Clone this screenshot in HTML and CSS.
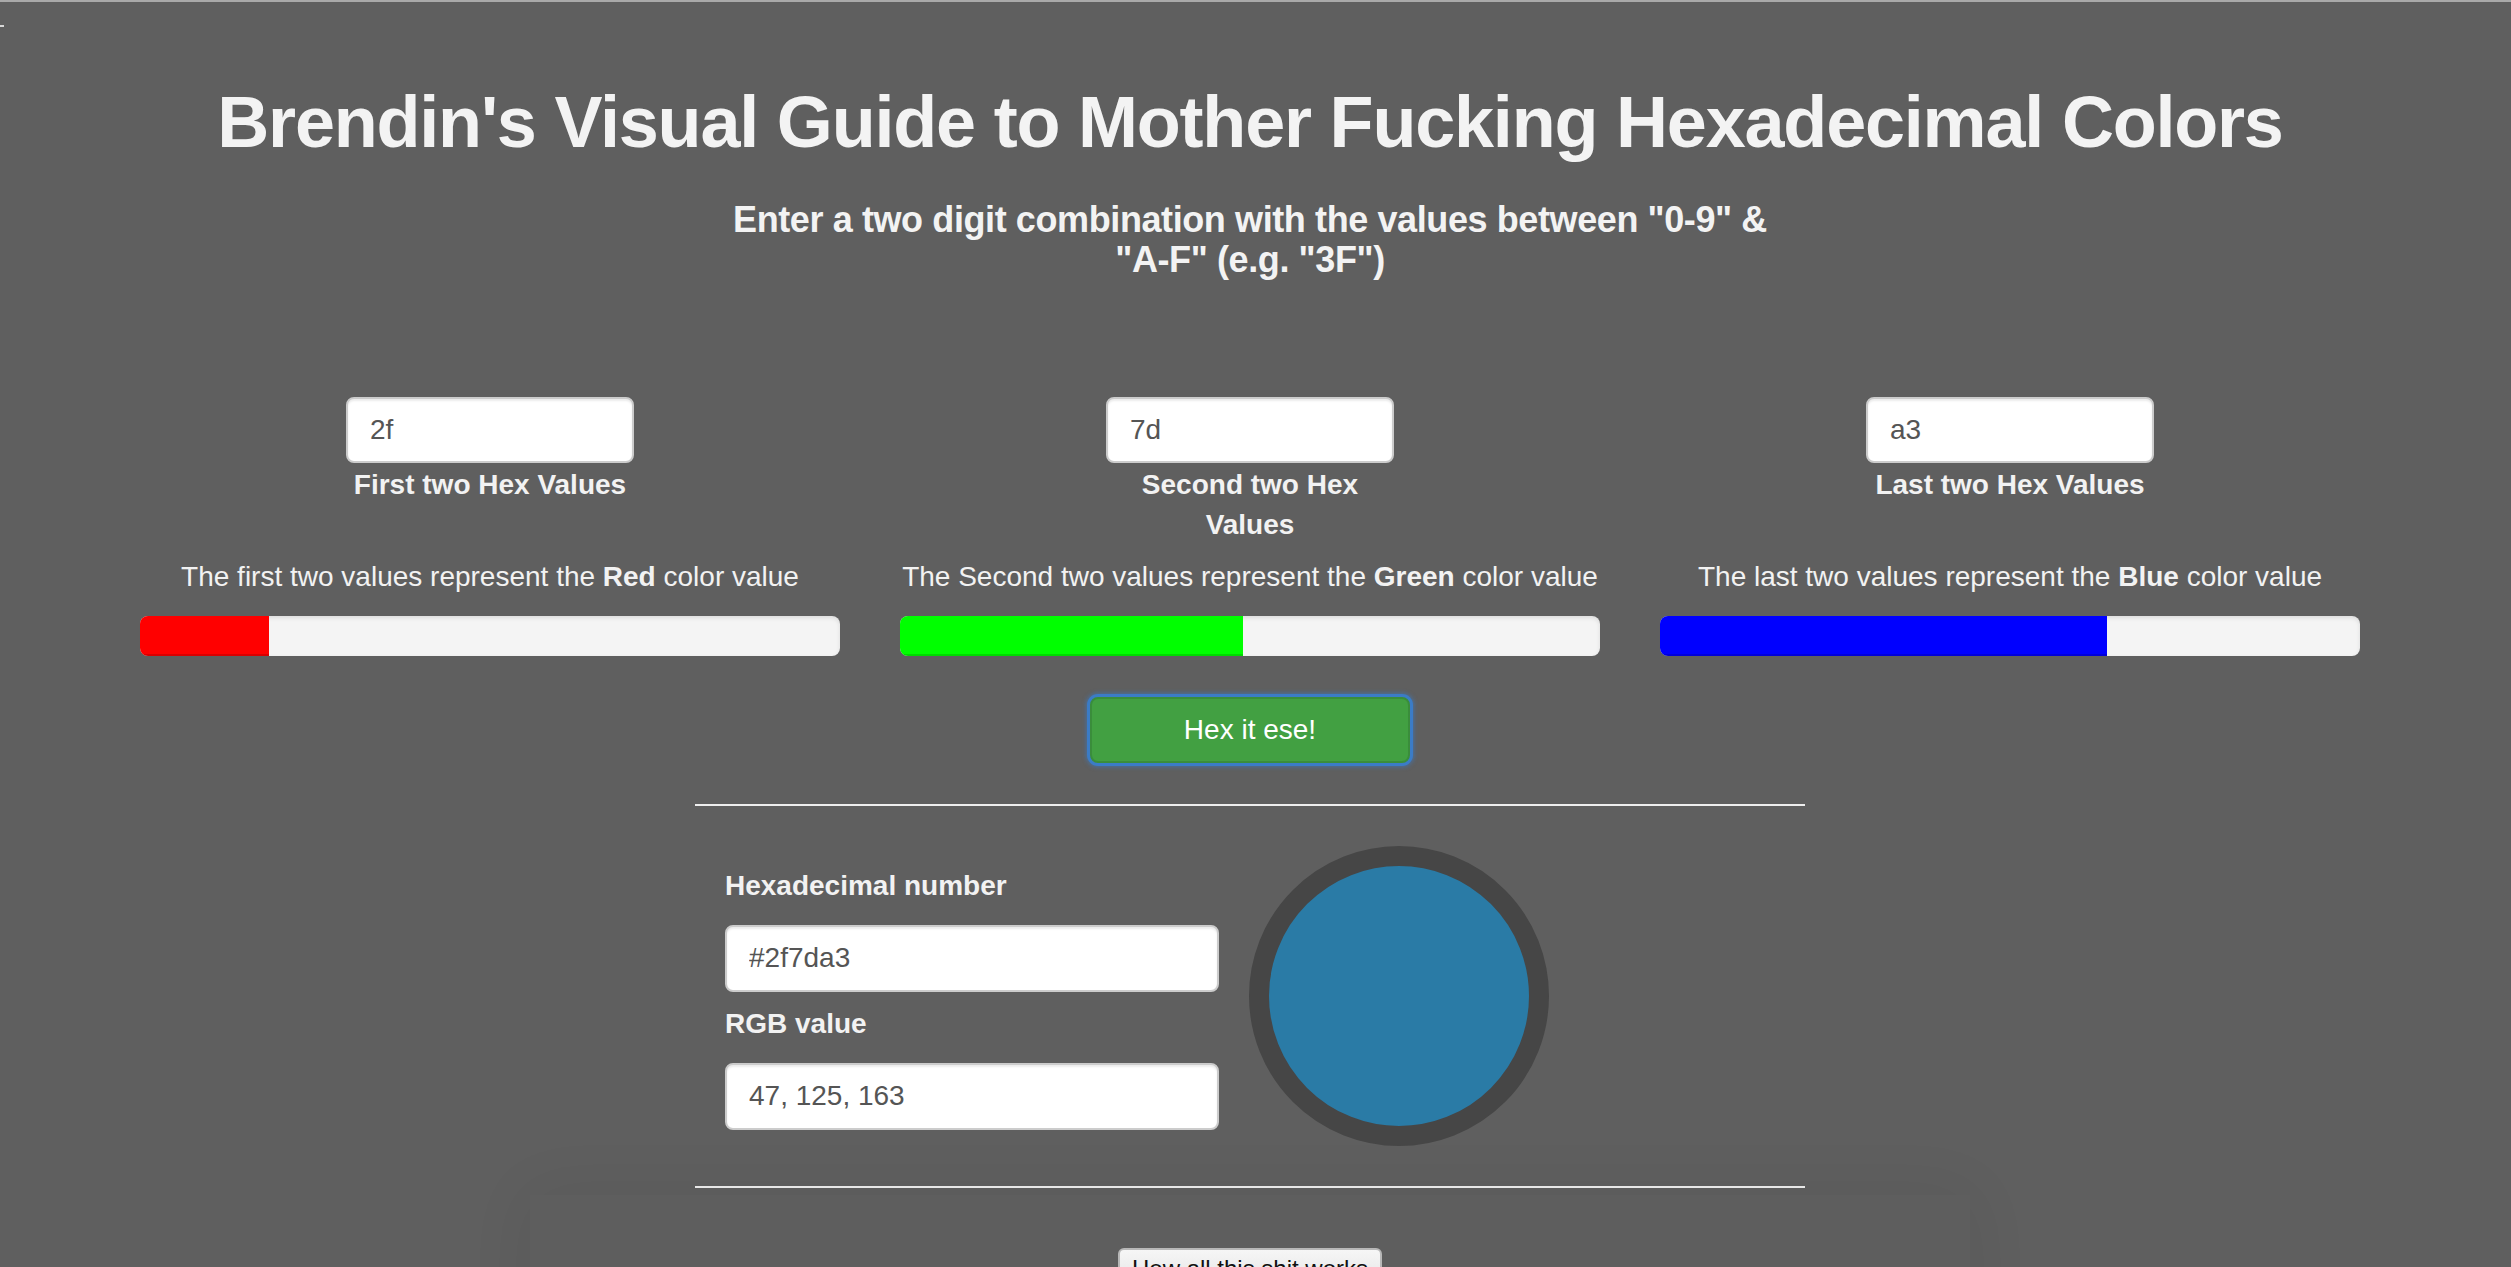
FILE: index.html
```html
<!DOCTYPE html>
<html lang="en">
<head>
<meta charset="utf-8">
<title>Brendin's Visual Guide to Hexadecimal Colors</title>
<link rel="stylesheet" href="styles.css">
</head>
<body>
<span class="corner-mark"></span>
<div class="page">
  <h1 class="title">Brendin's Visual Guide to Mother Fucking Hexadecimal Colors</h1>
  <h4 class="subtitle">Enter a two digit combination with the values between "0-9" &amp; "A-F" (e.g. "3F")</h4>

  <div class="hex-row">
    <div class="col">
      <div class="field">
        <input class="text-input" type="text" value="2f">
        <label class="field-label">First two Hex Values</label>
      </div>
    </div>
    <div class="col">
      <div class="field">
        <input class="text-input" type="text" value="7d">
        <label class="field-label">Second two Hex Values</label>
      </div>
    </div>
    <div class="col">
      <div class="field">
        <input class="text-input" type="text" value="a3">
        <label class="field-label">Last two Hex Values</label>
      </div>
    </div>
  </div>

  <div class="desc-row">
    <div class="col">
      <p class="desc">The first two values represent the <b>Red</b> color value</p>
      <div class="bar"><div class="fill fill-red" style="width:18.4%"></div></div>
    </div>
    <div class="col">
      <p class="desc">The Second two values represent the <b>Green</b> color value</p>
      <div class="bar"><div class="fill fill-green" style="width:49%"></div></div>
    </div>
    <div class="col">
      <p class="desc">The last two values represent the <b>Blue</b> color value</p>
      <div class="bar"><div class="fill fill-blue" style="width:63.9%"></div></div>
    </div>
  </div>

  <div class="action">
    <button class="hex-btn" type="button">Hex it ese!</button>
  </div>

  <hr class="rule">

  <div class="result">
    <div class="result-fields">
      <label class="result-label">Hexadecimal number</label>
      <input class="text-input wide" type="text" value="#2f7da3">
      <label class="result-label second">RGB value</label>
      <input class="text-input wide" type="text" value="47, 125, 163">
    </div>
    <div class="swatch"></div>
  </div>

  <hr class="rule">

  <div class="panel">
    <button class="how-btn" type="button">How all this shit works</button>
  </div>
</div>
</body>
</html>
```

FILE: styles.css
```css
html, body {
  margin: 0;
  padding: 0;
}

body {
  background: #5f5f5f;
  color: #f2f2f2;
  font-family: "Liberation Sans", Arial, Helvetica, sans-serif;
  border-top: 2px solid #a9a9a9;
  overflow: hidden;
}

.corner-mark {
  position: absolute;
  left: 0;
  top: 25px;
  width: 4px;
  height: 2px;
  background: #d8d8d8;
}

.page {
  width: 2500px;
}

.title {
  margin: 81px 0 0;
  font-size: 72px;
  line-height: 79px;
  letter-spacing: -1.2px;
  font-weight: bold;
  text-align: center;
  color: #f3f3f3;
}

.subtitle {
  width: 1080px;
  margin: 38px auto 0;
  font-size: 36px;
  line-height: 39.6px;
  letter-spacing: -0.4px;
  font-weight: bold;
  text-align: center;
  color: #f3f3f3;
}

.hex-row,
.desc-row {
  width: 2280px;
  margin: 0 auto;
  display: grid;
  grid-template-columns: repeat(3, 1fr);
}

.hex-row {
  margin-top: 118px;
}

.desc-row {
  margin-top: 12px;
}

.col {
  padding: 0 30px;
  text-align: center;
}

.field {
  width: 288px;
  margin: 0 auto;
  text-align: center;
}

.text-input {
  display: block;
  width: 288px;
  height: 66px;
  box-sizing: border-box;
  margin: 0;
  padding: 0 22px;
  border: 2px solid #cccccc;
  border-radius: 8px;
  background: #ffffff;
  color: #555555;
  font-family: "Liberation Sans", Arial, Helvetica, sans-serif;
  font-size: 28px;
  box-shadow: inset 0 2px 2px rgba(0, 0, 0, 0.08);
}

.field-label {
  display: block;
  margin-top: 2px;
  font-size: 28px;
  line-height: 40px;
  font-weight: bold;
  color: #f2f2f2;
}

.desc {
  margin: 0 0 19px;
  font-size: 28px;
  line-height: 40px;
  color: #f2f2f2;
}

.bar {
  height: 40px;
  border-radius: 8px;
  background: #f4f4f4;
  overflow: hidden;
  display: flex;
  box-shadow: inset 0 2px 4px rgba(0, 0, 0, 0.1);
}

.fill {
  height: 100%;
  box-shadow: inset 0 -2px 0 rgba(0, 0, 0, 0.15);
}

.fill-red { background: #ff0000; }
.fill-green { background: #00ff00; }
.fill-blue { background: #0000ff; }

.action {
  display: flex;
  justify-content: center;
  margin-top: 41px;
}

.hex-btn {
  width: 320px;
  height: 66px;
  box-sizing: border-box;
  border: 2px solid #3a8d3b;
  border-radius: 8px;
  background: #42a042;
  color: #ffffff;
  font-family: "Liberation Sans", Arial, Helvetica, sans-serif;
  font-size: 28px;
  box-shadow: 0 0 0 3px #3b7cc6, 0 0 4px 4px rgba(59, 124, 198, 0.6);
  padding: 0;
}

.rule {
  width: 1110px;
  margin: 41px auto 0;
  border: 0;
  border-top: 2px solid #eeeeee;
  height: 0;
}

.result + .rule {
  margin-top: 0;
}

.result {
  width: 1110px;
  box-sizing: border-box;
  margin: 0 auto;
  padding: 40px 30px;
  display: flex;
  align-items: center;
  gap: 30px;
}

.result-fields {
  width: 494px;
  padding-top: 3px;
}

.result-fields .wide {
  width: 494px;
  height: 67px;
}

.result-label {
  display: block;
  margin-bottom: 19px;
  font-size: 28px;
  line-height: 40px;
  font-weight: bold;
  color: #f2f2f2;
}

.result-label.second {
  margin-top: 12px;
}

.swatch {
  width: 300px;
  height: 300px;
  box-sizing: border-box;
  border-radius: 50%;
  border: 20px solid #464646;
  background: #2a7ba6;
  flex: none;
}

.panel {
  width: 1440px;
  min-height: 300px;
  margin: 7px auto 0;
  padding-top: 53px;
  box-sizing: border-box;
  background: #5e5e5e;
  box-shadow: 0 0 60px rgba(0, 0, 0, 0.07);
  display: flex;
  justify-content: center;
  align-items: flex-start;
}

.how-btn {
  width: 264px;
  box-sizing: border-box;
  padding: 5px 10px 8px;
  border: 2px solid #b8b8b8;
  border-radius: 6px;
  background: linear-gradient(#f6f6f6, #e2e2e2);
  color: #111111;
  font-family: "Liberation Sans", Arial, Helvetica, sans-serif;
  font-size: 24px;
  line-height: 28px;
  white-space: nowrap;
}
```
